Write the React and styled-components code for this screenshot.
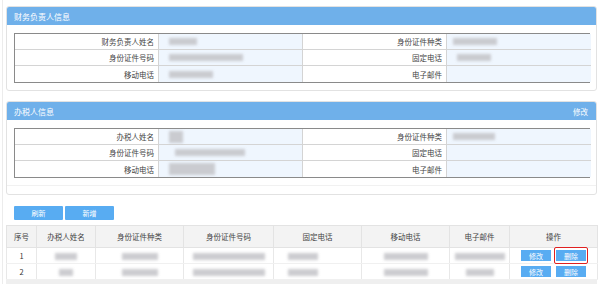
import React from "react";
import styled, { createGlobalStyle } from "styled-components";

const Global = createGlobalStyle`
  html, body { margin: 0; padding: 0; background: #fff; }
  body { font-family: "Noto Sans CJK SC", "Noto Sans", sans-serif; color: #333; }
`;

const Page = styled.div`
  width: 600px;
  height: 284px;
  overflow: hidden;
  box-sizing: border-box;
  display: flex;
  flex-direction: column;
`;

const Frame = styled.div`
  margin-left: 2px;
  border-left: 1px solid #ececec;
  padding: 6px 3px 0 3px;
  display: flex;
  flex-direction: column;
  flex: 1;
`;

const Panel = styled.div`
  border: 1px solid #e2e2e2;
  border-radius: 3px;
  background: #fff;
  margin-bottom: ${(p) => p.$mb || 0}px;
  overflow: hidden;
`;

const PanelHead = styled.div`
  height: 18px;
  background: #6fb0ea;
  color: #fff;
  font-size: 8px;
  display: flex;
  align-items: center;
  justify-content: space-between;
  padding: 0 8px 0 7px;
`;

const HeadLink = styled.span`
  font-size: 7.5px;
  color: #fff;
`;

const PanelBody = styled.div`
  padding: 8px 6px ${(p) => p.$pb}px 7px;
`;

const Footer = styled.div`
  height: 8px;
  border-top: 1px solid #f1f1f1;
  margin: 7px -6px 0 -7px;
`;

const InfoTable = styled.div`
  display: grid;
  grid-template-columns: 144px 144px 144px 144px;
  border: 1px solid #8a8a8a;
  box-sizing: border-box;
  width: 576px;
`;

const Label = styled.div`
  height: 16px;
  box-sizing: border-box;
  font-size: 7.5px;
  display: flex;
  align-items: center;
  justify-content: flex-end;
  padding-right: 4px;
  background: #fff;
  border-right: 1px solid #d4d4d4;
  border-bottom: ${(p) => (p.$last ? "none" : "1px solid #d4d4d4")};
  color: #444;
`;

const Value = styled.div`
  height: 16px;
  box-sizing: border-box;
  background: #eff6fe;
  display: flex;
  align-items: center;
  padding-left: 10px;
  border-right: ${(p) => (p.$end ? "none" : "1px solid #d4d4d4")};
  border-bottom: ${(p) => (p.$last ? "none" : "1px solid #d4d4d4")};
`;

const Blur = styled.span`
  display: inline-block;
  vertical-align: middle;
  width: ${(p) => p.$w}px;
  height: ${(p) => p.$h || 7}px;
  background: #c4c4c8;
  filter: blur(1.6px);
  opacity: 0.85;
  margin-left: ${(p) => p.$ml || 0}px;
`;

const Toolbar = styled.div`
  display: flex;
  gap: 2px;
  padding: 11px 0 5px 8px;
`;

const ToolBtn = styled.button`
  width: 49px;
  height: 14px;
  border: none;
  border-radius: 1px;
  background: #58acf2;
  color: #fff;
  font-family: inherit;
  font-size: 7px;
  padding: 0;
  line-height: 14px;
`;

const GridTable = styled.table`
  border-collapse: collapse;
  width: 591px;
  table-layout: fixed;
  font-size: 7.5px;
  line-height: 10px;
`;

const Th = styled.th`
  height: 21px;
  background: #f3f3f3;
  font-weight: normal;
  color: #444;
  border: 1px solid #e3e3e3;
  padding: 0;
  text-align: center;
`;

const Td = styled.td`
  height: 15px;
  border-left: 1px solid #e8e8e8;
  border-right: 1px solid #e8e8e8;
  border-bottom: 1px solid #f0f0f0;
  padding: 0;
  text-align: center;
  color: #333;
`;

const OpCell = styled.div`
  display: flex;
  justify-content: center;
  gap: 5px;
  align-items: center;
`;

const SmallBtn = styled.span`
  position: relative;
  display: inline-flex;
  align-items: center;
  justify-content: center;
  width: 30px;
  height: 11px;
  background: #58acf2;
  color: #fff;
  font-size: 7px;
  ${(p) =>
    p.$mark &&
    `&::after {
      content: "";
      position: absolute;
      left: -2px; top: -3px; right: -2px; bottom: -3px;
      border: 1.5px solid #e02020;
      border-radius: 2px;
    }`}
`;

const BottomBar = styled.div`
  flex: 1;
  background: #efefef;
`;

function Info({ rows, pb, footer }) {
  return (
    <PanelBody $pb={pb}>
      <InfoTable>
        {rows.map((r, i) => {
          const last = i === rows.length - 1;
          return (
            <React.Fragment key={i}>
              <Label $last={last}>{r[0]}</Label>
              <Value $last={last}>{r[1]}</Value>
              <Label $last={last}>{r[2]}</Label>
              <Value $last={last} $end>{r[3]}</Value>
            </React.Fragment>
          );
        })}
      </InfoTable>
      {footer && <Footer />}
    </PanelBody>
  );
}

const cols = [30, 59, 88, 90, 88, 88, 60, 88];
const heads = ["序号", "办税人姓名", "身份证件种类", "身份证件号码", "固定电话", "移动电话", "电子邮件", "操作"];

export default function App() {
  return (
    <Page>
      <Global />
      <Frame>
        <Panel $mb={10}>
          <PanelHead>财务负责人信息</PanelHead>
          <Info
            pb={7}
            rows={[
              ["财务负责人姓名", <Blur $w={28} />, "身份证件种类", <Blur $w={44} $ml={-4} />],
              ["身份证件号码", <Blur $w={74} />, "固定电话", <Blur $w={34} />],
              ["移动电话", <Blur $w={44} />, "电子邮件", null],
            ]}
          />
        </Panel>
        <Panel>
          <PanelHead>
            办税人信息
            <HeadLink>修改</HeadLink>
          </PanelHead>
          <Info
            pb={0}
            footer
            rows={[
              ["办税人姓名", <Blur $w={14} $h={12} />, "身份证件种类", <Blur $w={42} $ml={-4} />],
              ["身份证件号码", <Blur $w={70} $ml={6} />, "固定电话", null],
              ["移动电话", <Blur $w={46} $h={12} />, "电子邮件", null],
            ]}
          />
        </Panel>
        <Toolbar>
          <ToolBtn>刷新</ToolBtn>
          <ToolBtn>新增</ToolBtn>
        </Toolbar>
        <GridTable>
          <colgroup>
            {cols.map((w, i) => (
              <col key={i} style={{ width: w }} />
            ))}
          </colgroup>
          <thead>
            <tr>
              {heads.map((h) => (
                <Th key={h}>{h}</Th>
              ))}
            </tr>
          </thead>
          <tbody>
            {[1, 2].map((n) => (
              <tr key={n}>
                <Td>{n}</Td>
                <Td><Blur $w={n === 1 ? 22 : 14} /></Td>
                <Td><Blur $w={36} /></Td>
                <Td><Blur $w={72} /></Td>
                <Td><Blur $w={30} $ml={-30} /></Td>
                <Td><Blur $w={44} /></Td>
                <Td><Blur $w={n === 1 ? 50 : 28} /></Td>
                <Td>
                  <OpCell>
                    <SmallBtn>修改</SmallBtn>
                    <SmallBtn $mark={n === 1}>删除</SmallBtn>
                  </OpCell>
                </Td>
              </tr>
            ))}
          </tbody>
        </GridTable>
        <BottomBar />
      </Frame>
    </Page>
  );
}
